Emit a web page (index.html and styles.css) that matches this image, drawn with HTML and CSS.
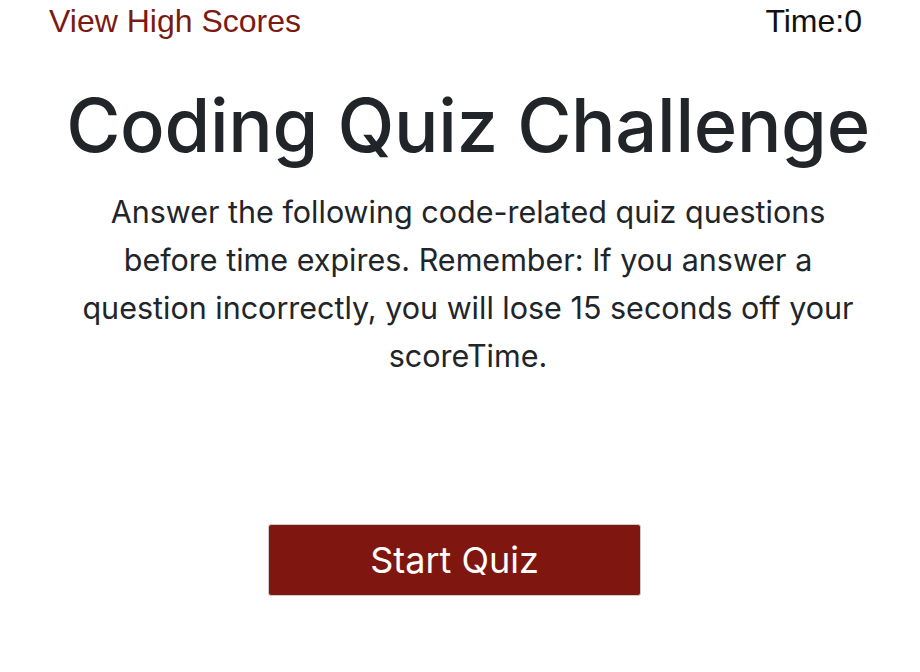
FILE: index.html
```html
<!DOCTYPE html>
<html>
<head>
<meta charset="utf-8">
<link rel="stylesheet" href="styles.css">
</head>
<body>
<header class="topbar">
  <a class="scores" href="#">View High Scores</a>
  <span class="timer">Time:0</span>
</header>
<main class="intro">
  <h1 class="title">Coding Quiz Challenge</h1>
  <p class="lead">Answer the following code-related quiz questions before time expires. Remember: If you answer a question incorrectly, you will lose 15 seconds off your scoreTime.</p>
  <button class="start">Start Quiz</button>
</main>
</body>
</html>
```
FILE: styles.css
```css
html, body { margin: 0; padding: 0; background: #fff; }
body { font-family: Inter, "Noto Sans", sans-serif; color: #212529; }
.topbar {
  display: flex;
  justify-content: space-between;
  align-items: center;
  padding: 0 58px 0 49px;
  height: 42px;
  font-family: "Liberation Sans", Arial, sans-serif;
  font-size: 32px;
}
.scores { color: #7b1a12; text-decoration: none; }
.timer { color: #111; }
.intro {
  display: flex;
  flex-direction: column;
  align-items: center;
  text-align: center;
  padding-left: 16px;
}
.title {
  margin: 38px 0 0;
  font-size: 74px;
  font-weight: 500;
  line-height: 90px;
  letter-spacing: -0.3px;
}
.lead {
  margin: 18px 0 0;
  width: 790px;
  font-size: 30.5px;
  line-height: 48px;
}
.start {
  margin: 144px 27px 0 0;
  width: 373px;
  height: 72px;
  background: #7f1710;
  color: #fff;
  border: 1px solid #ccc;
  border-radius: 3px;
  font-family: Inter, "Noto Sans", sans-serif;
  font-size: 36px;
}
```
